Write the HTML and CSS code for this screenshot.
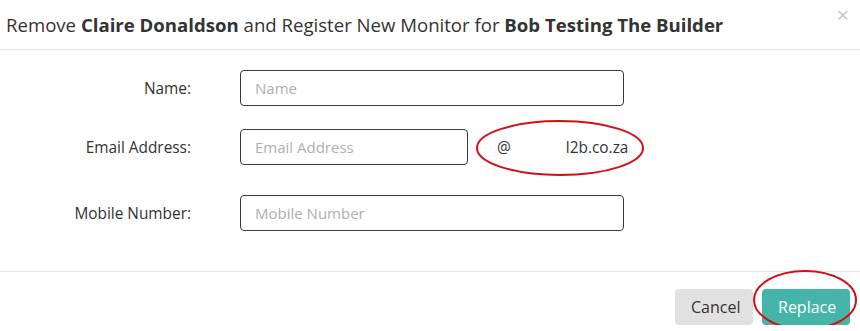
FILE: index.html
```html
<!DOCTYPE html>
<html lang="en">
<head>
    <meta charset="UTF-8">
    <title>Replace Monitor</title>
    <link rel="stylesheet" href="styles.css">
</head>
<body>
    <div class="modal">
        <div class="modal-header">
            <h4 class="modal-title">Remove <b>Claire Donaldson</b> and Register New Monitor for <b>Bob Testing The Builder</b></h4>
            <span class="close">&times;</span>
        </div>
        <div class="modal-body">
            <div class="row row-name">
                <label>Name:</label>
                <input type="text" class="field" placeholder="Name">
            </div>
            <div class="row row-email">
                <label>Email Address:</label>
                <div class="email-group">
                    <input type="text" class="field field-short" placeholder="Email Address">
                    <span class="domain">
                        <span class="at">@</span><span class="host">l2b.co.za</span>
                        <svg class="ring ring-domain" viewBox="0 0 170 58"><ellipse cx="85" cy="29" rx="83" ry="27" fill="none" stroke="#d40f14" stroke-width="2"/></svg>
                    </span>
                </div>
            </div>
            <div class="row row-mobile">
                <label>Mobile Number:</label>
                <input type="text" class="field" placeholder="Mobile Number">
            </div>
        </div>
        <div class="modal-footer">
            <button class="btn btn-cancel">Cancel</button>
            <button class="btn btn-replace">Replace
                <svg class="ring ring-btn" viewBox="0 0 106 62"><ellipse cx="53" cy="31" rx="51" ry="29" fill="none" stroke="#d40f14" stroke-width="2"/></svg>
            </button>
        </div>
    </div>
</body>
</html>
```

FILE: styles.css
```css
body {
    margin: 0;
    background-color: white;
    font-family: "Open Sans", sans-serif;
    color: #333;
}

.modal {
    width: 860px;
}

.modal-header {
    height: 50px;
    border-bottom: 1px solid #e5e5e5;
    display: flex;
    align-items: center;
    justify-content: space-between;
    padding: 0 10px 0 6px;
    box-sizing: border-box;
}
.modal-title {
    margin: 0;
    font-size: 18.6px;
    font-weight: normal;
    color: #333;
}
.modal-title b {
    font-weight: bold;
}
.close {
    color: #c8c8c8;
    font-size: 22px;
    line-height: 1;
    margin-top: -22px;
    margin-right: 1px;
}

.modal-body {
    padding: 20px 0 40px;
}
.row {
    display: grid;
    grid-template-columns: 191px 1fr;
    column-gap: 49px;
    align-items: center;
}
.row-email {
    margin-top: 23px;
}
.row-mobile {
    margin-top: 30px;
}
.row label {
    text-align: right;
    font-size: 15.4px;
    color: #333;
}

.field {
    width: 384px;
    height: 36px;
    box-sizing: border-box;
    border: 1px solid #3a3a3a;
    border-radius: 4px;
    padding: 0 14px;
    font-family: "Open Sans", sans-serif;
    font-size: 15px;
    color: #333;
}
.field::placeholder {
    color: #b0b0b0;
}
.field-short {
    width: 228px;
}

.email-group {
    display: flex;
    align-items: center;
}
.domain {
    position: relative;
    display: flex;
    align-items: center;
    margin-left: 29px;
    font-size: 15.4px;
    color: #333;
}
.host {
    margin-left: 55px;
}

.ring {
    position: absolute;
    pointer-events: none;
}
.ring-domain {
    left: -22px;
    top: -18px;
    width: 170px;
    height: 58px;
}

.modal-footer {
    border-top: 1px solid #e5e5e5;
    padding: 17px 10px 0 0;
    display: flex;
    justify-content: flex-end;
    gap: 9px;
}
.btn {
    height: 36px;
    border: none;
    border-radius: 4px;
    font-family: "Open Sans", sans-serif;
    font-size: 16px;
    padding: 0 16px;
}
.btn-cancel {
    width: 78px;
    background-color: #e1e1e1;
    color: #333;
}
.btn-replace {
    position: relative;
    width: 88px;
    background-color: #45b5aa;
    color: white;
}
.ring-btn {
    left: -10px;
    top: -20px;
    width: 106px;
    height: 62px;
}
```
